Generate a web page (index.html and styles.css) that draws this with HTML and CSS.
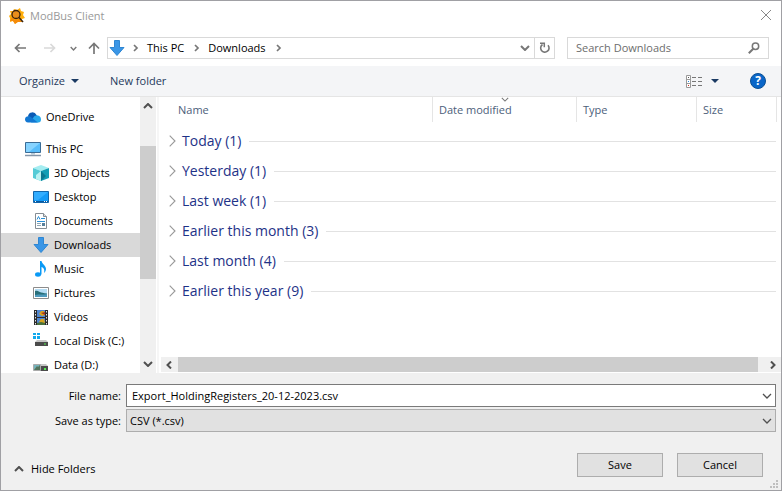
FILE: index.html
```html
<!DOCTYPE html>
<html lang="en">
<head>
<meta charset="utf-8">
<title>ModBus Client</title>
<link rel="stylesheet" href="styles.css">
</head>
<body>
<svg class="defs" aria-hidden="true">
  <symbol id="down-arrow" viewBox="0 0 16 16"><path d="M5.500 .5h5v7h4.500L8 15.500 1 7.500h4.500z" fill="#3a96e6" stroke="#2f86d2"/></symbol>
  <symbol id="crumb" viewBox="0 0 6 8"><path d="M1 1l3 3-3 3" fill="none" stroke="#777" stroke-width="1.700"/></symbol>
  <symbol id="chev" viewBox="0 0 10 6"><path d="M1 1l4 4 4-4" fill="none" stroke="currentColor" stroke-width="var(--w,1.300)"/></symbol>
  <symbol id="expand" viewBox="0 0 7 12"><path d="M.7 .7L6 6 .7 11.300" fill="none" stroke="#999" stroke-width="1.100"/></symbol>
</svg>
<div class="dialog">
  <header class="titlebar">
    <svg class="app-icon" width="16" height="16" viewBox="0 0 16 16"><path d="M5 1l3 1 3-2 1 3 3 1-1 3 2 3-3 1v3l-4-1-3 3-2-3-3 1 0-4-1-2 2-2-1-3 3 0z" fill="#ffae0c"/><path d="M3 9l3 3 4-1 3 3-4 0-3 2-2-3-3 0z" fill="#f58b0a"/><circle cx="7" cy="6.500" r="4" fill="#e98e1c" stroke="#3b2410" stroke-width="1.300"/><path d="M10 9.500l4 4.500" stroke="#3b2410" stroke-width="1.600"/></svg>
    <h1>ModBus Client</h1>
    <button class="close" aria-label="Close"><svg width="10" height="10" viewBox="0 0 10 10"><path d="M0 0l10 10M10 0L0 10" stroke="#888" stroke-width="1"/></svg></button>
  </header>

  <nav class="addressbar" aria-label="Location">
    <div class="history">
      <button aria-label="Back"><svg width="12" height="10" viewBox="0 0 12 10"><path d="M12 5H1.500M5.500 1l-4 4 4 4" fill="none" stroke="#777" stroke-width="1.700"/></svg></button>
      <button aria-label="Forward"><svg width="12" height="10" viewBox="0 0 12 10"><path d="M0 5h10.500M6.500 1l4 4-4 4" fill="none" stroke="#d9d9d9" stroke-width="1.700"/></svg></button>
      <button class="recent" aria-label="Recent locations"><svg width="7" height="5"><use href="#chev"/></svg></button>
      <button class="up" aria-label="Up"><svg width="12" height="12" viewBox="0 0 12 12"><path d="M6 12V1.500M1 6.500l5-5 5 5" fill="none" stroke="#777" stroke-width="1.700"/></svg></button>
    </div>
    <div class="path">
      <svg width="16" height="16"><use href="#down-arrow"/></svg>
      <svg class="crumb" width="6" height="8"><use href="#crumb"/></svg>
      <a href="#">This PC</a>
      <svg class="crumb" width="6" height="8"><use href="#crumb"/></svg>
      <a href="#">Downloads</a>
      <svg class="crumb" width="6" height="8"><use href="#crumb"/></svg>
      <button class="path-drop" aria-label="Previous locations"><svg width="10" height="6"><use href="#chev"/></svg></button>
      <button class="refresh" aria-label="Refresh"><svg width="12" height="12" viewBox="0 0 12 12"><path d="M3.500 2.500A4.200 4.200 0 1 0 9 3.200" fill="none" stroke="#777" stroke-width="1.600"/><path d="M1 1.300h4.300v4" fill="none" stroke="#777" stroke-width="1.500"/></svg></button>
    </div>
    <label class="search">
      <input type="text" placeholder="Search Downloads" aria-label="Search Downloads">
      <svg width="12" height="12" viewBox="0 0 12 12"><circle cx="7.500" cy="4.300" r="3.200" fill="none" stroke="#777" stroke-width="1.500"/><path d="M5.300 6.800L.8 11.300" stroke="#777" stroke-width="2"/></svg>
    </label>
  </nav>

  <div class="toolbar">
    <button>Organize <svg width="8" height="4" viewBox="0 0 8 4"><path d="M0 0h8L4 4z" fill="#1a3a63"/></svg></button>
    <button>New folder</button>
    <button class="view" aria-label="Change your view">
      <svg width="17" height="13" viewBox="0 0 17 13"><path d="M.5 .5h4v12h-4zM.5 4.500h4M.5 8.500h4" fill="#fff" stroke="#999"/><path d="M2 2h1v1H2z" fill="#555"/><path d="M2 6h1v1H2z" fill="#2b8be0"/><path d="M2 10h1v1H2z" fill="#d03020"/><path d="M6 2.500h4M12 2.500h4M6 6.500h4M12 6.500h4M6 10.500h4M12 10.500h4" stroke="#777"/></svg>
      <svg width="8" height="4" viewBox="0 0 8 4"><path d="M0 0h8L4 4z" fill="#1a3a63"/></svg>
    </button>
    <button class="help" aria-label="Help">?</button>
  </div>

  <main class="browser">
    <nav class="tree" aria-label="Folders">
      <ul>
        <li class="root drive-root"><svg width="16" height="16" viewBox="0 0 16 16"><path d="M3 7a4.500 4.500 0 0 1 8.500-1L13 9l-7 4z" fill="#0b5bb5"/><path d="M8 9a4.500 4.500 0 0 1 5-2.500c2 .5 3 2 3 4 0 2-1 3-2.500 3H6z" fill="#28a8ea"/><path d="M0 10.500C0 8 2 7 4 7.300c2 .2 4 2.700 9 6.200H3C1 13.500 0 12 0 10.500z" fill="#1277d2"/></svg>OneDrive</li>
        <li class="root"><svg width="16" height="16" viewBox="0 0 16 16"><path d="M.5 1.500h15v10H.5z" fill="#58bdfb" stroke="#3a6c96"/><path d="M1 2h14L4 11H1z" fill="#86d3ff"/><path d="M6 12h4v1.500H6z" fill="#b8cbd8"/><path d="M0 14.500h16" stroke="#8496a9" stroke-width="1.500"/></svg>This PC</li>
        <li><svg width="16" height="16" viewBox="0 0 16 16"><path d="M0 3l8-3 8 3-8 3z" fill="#a5edf1"/><path d="M0 3l8 3v10l-8-3z" fill="#54cbd6"/><path d="M16 3L8 6v10l8-3z" fill="#139eb5"/><path d="M3 10l5-4v10l-5-2z" fill="#b9f2f2"/><path d="M8 6l5 5-5 5z" fill="#0c7890"/></svg>3D Objects</li>
        <li><svg width="16" height="16" viewBox="0 0 16 16"><path d="M.5 2.500h15v11H.5z" fill="#149af7" stroke="#1266ac"/><path d="M1 3h14L5 11H1z" fill="#32adff"/><path d="M1 12.500h14" stroke="#0a579c"/><path d="M2 12.500h1M11 12.500h1M13 12.500h1" stroke="#fff"/></svg>Desktop</li>
        <li><svg width="16" height="16" viewBox="0 0 16 16"><path d="M2.500 .5h8l3 3v12h-11z" fill="#fff" stroke="#858d94"/><path d="M10.500 .5v3h3" fill="#ddd" stroke="#858d94"/><path d="M4 6.500l1.500-3 1.500 3M8 5.500h4M4 8.500h8" fill="none" stroke="#2a8fd6"/><path d="M4 10.500h4M4 12.500h4" stroke="#8fa5b3"/><path d="M9 10h3v3H9z" fill="#577f9a"/></svg>Documents</li>
        <li class="selected"><svg width="16" height="16"><use href="#down-arrow"/></svg>Downloads</li>
        <li><svg width="16" height="16" viewBox="0 0 16 16"><ellipse cx="5" cy="13.500" rx="3" ry="2.200" fill="#0a9af5"/><path d="M7 13.500V0h1.500c.5 3 4.500 4.500 4.500 8 0 1.500-.8 3-2 4 1-3.500-.5-5.500-2.500-6v7.500z" fill="#0a9af5"/></svg>Music</li>
        <li><svg width="16" height="16" viewBox="0 0 16 16"><path d="M.5 2.500h15v11H.5z" fill="#fff" stroke="#8c8c8c"/><path d="M2 4h12v8H2z" fill="#b4dcf4"/><path d="M2 6c3-1 4 2 12 2.500V12H2z" fill="#286f79"/><path d="M2 10c5-1 8 0 12-1v3H2z" fill="#4e9abd"/></svg>Pictures</li>
        <li><svg width="16" height="16" viewBox="0 0 16 16"><path d="M1 1h14v15H1z" fill="#2b2b2b"/><path d="M4 1h8v7H4z" fill="#4f86cf"/><path d="M4 9h8v7H4z" fill="#4f86cf"/><path d="M8 2h3l1 4-3 1-3-2z" fill="#d9a41c"/><path d="M8 4l4-1v3z" fill="#a8331f"/><path d="M8 10h3l1 4-3 1-3-2z" fill="#d9a41c"/><path d="M4 14l4-1 4 1v2H4z" fill="#49713d"/><path d="M2.500 2v14M13.500 2v14" stroke="#e4e4e4" stroke-dasharray="1.500 1.500"/></svg>Videos</li>
        <li><svg width="16" height="16" viewBox="0 0 16 16"><path d="M0 0h3v2H0zM4 0h3v2H4zM0 3h3v3H0zM4 3h3v3H4z" fill="#12a9ed"/><path d="M4 7h9l2 2H2z" fill="#c6c6c6"/><path d="M2 9h13v4H2z" fill="#4b4b4b"/><path d="M11 11h2" stroke="#55ee50"/></svg>Local Disk (C:)</li>
        <li><svg width="16" height="16" viewBox="0 0 16 16"><path d="M3 7h10l2 2H1z" fill="#c6c6c6"/><path d="M1 9h14v5H1z" fill="#4b4b4b"/><path d="M.5 7.500h7v6h-7z" fill="#75b4bd" stroke="#aaa"/><path d="M1 13l3-4 1 1 2-2v5z" fill="#54755d"/><path d="M11 12h2" stroke="#55ee50" stroke-width="2"/></svg>Data (D:)</li>
      </ul>
      <div class="vscroll" aria-hidden="true">
        <svg class="flip" width="10" height="6"><use href="#chev"/></svg>
        <i></i>
        <svg width="10" height="6"><use href="#chev"/></svg>
      </div>
    </nav>
    <section class="files">
      <div class="columns">
        <span class="name">Name</span>
        <span class="date">Date modified<svg width="8" height="5"><use href="#chev"/></svg></span>
        <span class="type">Type</span>
        <span class="size">Size</span>
      </div>
      <ul class="groups">
        <li><svg width="7" height="12"><use href="#expand"/></svg>Today (1)</li>
        <li><svg width="7" height="12"><use href="#expand"/></svg>Yesterday (1)</li>
        <li><svg width="7" height="12"><use href="#expand"/></svg>Last week (1)</li>
        <li><svg width="7" height="12"><use href="#expand"/></svg>Earlier this month (3)</li>
        <li><svg width="7" height="12"><use href="#expand"/></svg>Last month (4)</li>
        <li><svg width="7" height="12"><use href="#expand"/></svg>Earlier this year (9)</li>
      </ul>
      <div class="hscroll" aria-hidden="true">
        <svg width="6" height="8" viewBox="0 0 6 8"><path d="M5 .5L1.500 4 5 7.500" fill="none" stroke="#505050" stroke-width="2"/></svg>
        <i></i>
        <svg width="6" height="8" viewBox="0 0 6 8"><path d="M1 .5L4.500 4 1 7.500" fill="none" stroke="#505050" stroke-width="2"/></svg>
      </div>
    </section>
  </main>

  <form class="save">
    <div class="fields">
      <label for="fname">File name:</label>
      <div class="combo">
        <input id="fname" type="text" value="Export_HoldingRegisters_20-12-2023.csv">
        <svg width="10" height="6"><use href="#chev"/></svg>
      </div>
      <label for="ftype">Save as type:</label>
      <div class="combo">
        <select id="ftype"><option>CSV (*.csv)</option></select>
        <svg width="10" height="6"><use href="#chev"/></svg>
      </div>
    </div>
    <div class="actions">
      <button type="button" class="hide"><svg class="flip" width="10" height="6"><use href="#chev"/></svg>Hide Folders</button>
      <button type="button" class="push">Save</button>
      <button type="button" class="push">Cancel</button>
    </div>
    <svg class="grip" width="8" height="8" viewBox="0 0 8 8"><path d="M6 0h2v2H6zM3 3h2v2H3zM6 3h2v2H6zM0 6h2v2H0zM3 6h2v2H3zM6 6h2v2H6z" fill="#bfbfbf"/></svg>
  </form>
</div>
</body>
</html>
```
FILE: styles.css
```css
* { box-sizing: border-box; }

body {
  margin: 0;
  font: 11px/16px "Open Sans", "Noto Sans", sans-serif;
  color: #000;
}

button, input, select {
  font: inherit;
  color: inherit;
  margin: 0;
  padding: 0;
  border: 0;
  border-radius: 0;
  background: none;
}

ul { margin: 0; padding: 0; list-style: none; }
a { color: inherit; text-decoration: none; }
svg { flex: none; display: block; }
.defs { position: absolute; width: 0; height: 0; }
.flip { transform: rotate(180deg); }

.dialog {
  display: flex;
  flex-direction: column;
  height: 100vh;
  border: 1px solid #a0a0a4;
  background: #fff;
}

/* Title bar */
.titlebar { display: flex; align-items: center; height: 30px; padding: 0 9px 0 8px; gap: 5px; }
.titlebar h1 { flex: 1; margin: 0; font-size: 11px; font-weight: 400; color: #999; }
.close { display: flex; padding: 0 1px 2px; }

/* Address bar */
.addressbar { display: flex; padding: 6px 12px 7px 13px; }
.history { display: flex; align-items: center; width: 93px; color: #777; --w: 2; }
.history button { display: flex; margin-right: 18px; }
.history .recent { margin: 0 11px 0 -4px; }
.history .up { margin: 0; }

.path {
  flex: 1;
  display: flex;
  align-items: center;
  height: 22px;
  padding-left: 1px;
  border: 1px solid #d9d9d9;
}
.crumb { margin: 0 8px; }
.path a { margin-right: 2px; }
.path-drop { display: flex; margin-left: auto; padding: 0 4px; color: #777; --w: 2; }
.refresh { display: flex; align-items: center; justify-content: center; width: 20px; height: 20px; border-left: 1px solid #d9d9d9; }

.search {
  display: flex;
  align-items: center;
  width: 202px;
  height: 22px;
  margin-left: 12px;
  padding: 0 8px;
  border: 1px solid #d9d9d9;
}
.search input { flex: 1; min-width: 0; outline: 0; }
.search input::placeholder { color: #6d6d6d; opacity: 1; }

/* Toolbar */
.toolbar {
  display: flex;
  align-items: center;
  height: 31px;
  padding: 0 15px 0 18px;
  gap: 31px;
  background: #f4f5f7;
  border-bottom: 1px solid #e5e5e5;
  color: #1e395b;
}
.toolbar button { display: flex; align-items: center; gap: 6px; }
.toolbar .view { margin-left: auto; gap: 8px; }
.toolbar .help {
  justify-content: center;
  width: 16px;
  height: 16px;
  border: 1px solid #0a4f94;
  border-radius: 50%;
  background: #0a66c8;
  color: #fff;
  font-size: 12px;
  font-weight: 700;
}

/* Folder tree and file list */
.browser { flex: 1; display: flex; min-height: 0; }
.tree { display: flex; width: 158px; border-right: 2px solid #f6f6f6; }
.tree ul { flex: 1; overflow: hidden; padding-top: 8px; }
.tree li { display: flex; align-items: center; gap: 5px; height: 24px; padding-left: 32px; white-space: nowrap; }
.tree .root { padding-left: 24px; }
.tree .drive-root { margin-bottom: 8px; }
.tree .selected { background: #d9d9d9; }

.vscroll { display: flex; flex-direction: column; align-items: center; width: 16px; margin-right: 1px; padding: 6px 0; background: #f0f0f0; color: #505050; --w: 2; }
.vscroll i { width: 16px; height: 133px; margin: 37px 0 auto; background: #cdcdcd; }

.files { flex: 1; display: flex; flex-direction: column; min-width: 0; padding-left: 2px; }
.columns { display: flex; height: 25px; margin-right: 4px; color: #4c607a; line-height: 26px; }
.columns span { position: relative; padding-left: 6px; border-right: 1px solid #e5e5e5; }
.columns .name { flex: 1; padding-left: 17px; }
.columns .date { width: 144px; }
.columns .date svg { position: absolute; left: 68px; top: 0; color: #777; }
.columns .type { width: 120px; }
.columns .size { width: 80px; }

.groups { flex: 1; padding: 4px 5px 0 8px; }
.groups li { display: flex; align-items: center; gap: 6px; height: 30px; font-size: 14px; color: #1e3287; }
.groups li::after { content: ""; flex: 1; height: 1px; margin-left: 2px; background: #e2e2e2; }

.hscroll { display: flex; align-items: center; height: 15px; margin-bottom: 1px; padding: 0 5px; background: #f0f0f0; }
.hscroll i { flex: 1; height: 15px; margin: 0 12px 0 6px; background: #cdcdcd; }

/* File name, type and actions */
.save { position: relative; height: 117px; padding: 11px 5px 0 13px; background: #f0f0f0; }
.fields { display: grid; grid-template-columns: 107px 1fr; column-gap: 5px; row-gap: 2px; align-items: center; text-align: right; }
.combo { position: relative; color: #505050; }
.combo input, .combo select { display: block; width: 100%; height: 23px; outline: 0; color: #000; }
.combo input { padding: 0 24px 0 5px; border: 1px solid #7a7a7a; background: #fff; }
.combo select { appearance: none; padding: 0 24px 0 3px; border: 1px solid #adadad; background: #e1e1e1; }
.combo svg { position: absolute; right: 4px; top: 9px; pointer-events: none; }

.actions { display: flex; align-items: flex-end; gap: 14px; margin-top: 21px; padding-right: 13px; }
.hide { display: flex; align-items: center; gap: 7px; margin-right: auto; color: #000; --w: 2; }
.hide svg { color: #505050; }
.push { width: 86px; height: 24px; border: 1px solid #adadad; background: #e1e1e1; }
.grip { position: absolute; right: 3px; bottom: 2px; }
```
